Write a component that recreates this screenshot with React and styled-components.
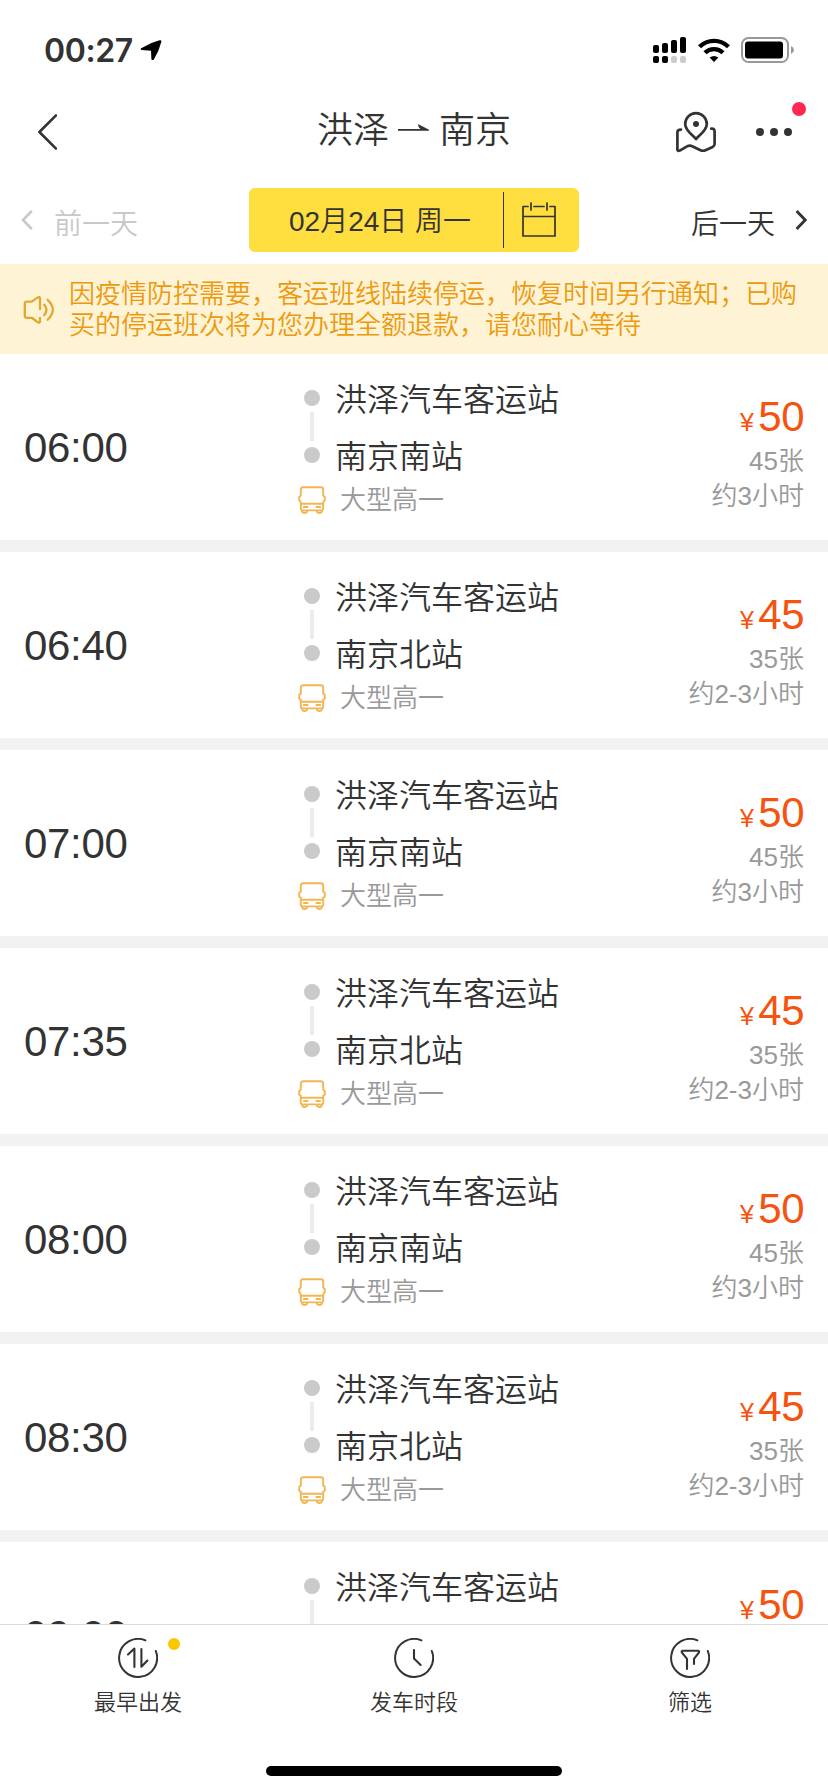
import React from "react"
import styled, { createGlobalStyle } from "styled-components"

const trips = [
  { time: "06:00", to: "南京南站", price: 50, left: 45, duration: "约3小时" },
  { time: "06:40", to: "南京北站", price: 45, left: 35, duration: "约2-3小时" },
  { time: "07:00", to: "南京南站", price: 50, left: 45, duration: "约3小时" },
  { time: "07:35", to: "南京北站", price: 45, left: 35, duration: "约2-3小时" },
  { time: "08:00", to: "南京南站", price: 50, left: 45, duration: "约3小时" },
  { time: "08:30", to: "南京北站", price: 45, left: 35, duration: "约2-3小时" },
  { time: "09:00", to: "南京南站", price: 50, left: 45, duration: "约3小时" },
]

export default function App() {
  return (
    <Page>
      <GlobalStyle />
      <StatusBar />
      <NavBar />
      <DateBar />
      <Notice>
        <SpeakerIcon />
        <p>
          因疫情防控需要，客运班线陆续停运，恢复时间另行通知；已购买的停运班次将为您办理全额退款，请您耐心等待
        </p>
      </Notice>
      <TripList>
        {trips.map((trip) => (
          <TripItem key={trip.time} {...trip} />
        ))}
      </TripList>
      <TabBar />
    </Page>
  )
}

function StatusBar() {
  return (
    <Status>
      <Clock>00:27</Clock>
      <svg width="22" height="21" viewBox="0 0 22 21">
        <path
          d="M1.2 8.2 Q10 2.6 19.6 .2 Q21.8 -.2 21.3 2 Q19 11 14 19.2 Q12.4 21 11.4 19.2 L11 10.7 L1.6 9.9 Q-.3 9.4 1.2 8.2Z"
          fill="#000"
        />
      </svg>
      <StatusIcons>
        <svg width="34" height="27" viewBox="0 0 34 27">
          <rect x="0" y="8" width="6" height="8" rx="2" />
          <rect x="9" y="6" width="6" height="10" rx="2" />
          <rect x="18" y="3" width="6" height="13" rx="2" />
          <rect x="27" y="0" width="6" height="16" rx="2" />
          <rect x="0" y="19" width="6" height="7" rx="2" />
          <rect x="9" y="19" width="6" height="7" rx="2" />
          <rect x="18" y="19" width="6" height="7" rx="2" fill="#ccc" />
          <rect x="27" y="19" width="6" height="7" rx="2" fill="#ccc" />
        </svg>
        <svg width="32" height="25" viewBox="0 0 32 25">
          <g fill="none" stroke="#000" strokeWidth="4.4">
            <path d="M1.5 8.8 A20.6 20.6 0 0 1 30.5 8.8" />
            <path d="M7 14.8 A12.8 12.8 0 0 1 25 14.8" />
          </g>
          <path d="M16 24 L11.6 19.6 Q16 16.4 20.4 19.6Z" />
        </svg>
        <svg width="54" height="26" viewBox="0 0 54 26">
          <rect x="1" y="1" width="46" height="24" rx="6.5" fill="none" stroke="#999" strokeWidth="2" />
          <rect x="4" y="4.5" width="38" height="17" rx="3" />
          <path d="M50 9 Q53 10.4 53 13 Q53 15.6 50 17Z" fill="#999" />
        </svg>
      </StatusIcons>
    </Status>
  )
}

function NavBar() {
  return (
    <Nav>
      <NavSide>
        <svg width="20" height="38" viewBox="0 0 20 38">
          <path d="M19 2.4 L2.4 19 L19 35.6" {...line} strokeWidth="2.6" />
        </svg>
      </NavSide>
      <Title>
        洪泽
        <svg width="32" height="10" viewBox="0 0 32 10">
          <path d="M0 7.8 H31 V6.8 L20 1 Q20 4 22.4 6 H0Z" fill="#333" />
        </svg>
        南京
      </Title>
      <NavSide $right>
        <svg width="42" height="42" viewBox="0 0 42 42">
          <g {...line} strokeWidth="2.7">
            <path d="M21 28 C17.4 23.8 10.2 19.6 10.2 13 A10.8 10.8 0 0 1 31.8 13 C31.8 19.6 24.6 23.8 21 28Z" />
            <path d="M6 18.6 Q2.4 18.6 2.4 21.4 V38.6 Q2.4 40.6 4.8 39.6 L12 35.4 Q14.6 34 17.2 35.2 L25.6 39.2 Q28 40.4 31 39 L37.6 36 Q39.6 35 39.6 33 V20.4 Q39.6 17.2 36.2 17.6" />
          </g>
          <circle cx="21" cy="13" r="3" fill="#333" />
        </svg>
        <More>
          <i />
          <i />
          <i />
          <Badge />
        </More>
      </NavSide>
    </Nav>
  )
}

function DateBar() {
  return (
    <Dates>
      <DayLink $muted>
        <svg width="12" height="22" viewBox="0 0 12 22">
          <path d="M10.8 2 L2 11 L10.8 20" fill="none" stroke="currentColor" strokeWidth="2.6" />
        </svg>
        <span>前一天</span>
      </DayLink>
      <DatePicker>
        <span>02月24日 周一</span>
        <svg width="36" height="36" viewBox="0 0 36 36">
          <path d="M7 4.5 H2 V34 H34 V4.5 H29 M13 4.5 H23 M2 14.5 H34 M10 1 V8 M26 1 V8" {...line} strokeWidth="1.7" />
        </svg>
      </DatePicker>
      <DayLink $right>
        <span>后一天</span>
        <svg width="12" height="22" viewBox="0 0 12 22">
          <path d="M1.6 2 L10.2 11 L1.6 20" fill="none" stroke="currentColor" strokeWidth="2.8" />
        </svg>
      </DayLink>
    </Dates>
  )
}

function SpeakerIcon() {
  return (
    <svg width="32" height="30" viewBox="0 0 32 30">
      <g fill="none" stroke="#e2a82c" strokeWidth="2.3" strokeLinecap="round" strokeLinejoin="round">
        <path d="M17 14 V3.8 Q17 1.2 14.8 2.4 L8.8 6.6 H3.8 Q1.8 6.6 1.8 8.6 V20.8 Q1.8 22.8 3.8 22.8 H8.8 L14.8 27.2 Q17 28.4 17 26.2 V23" />
        <path d="M21.2 9.8 Q25.6 14.8 21.2 20.2" />
        <path d="M24.6 4.8 Q35 14.6 24.6 24.8" />
      </g>
    </svg>
  )
}

function BusIcon() {
  return (
    <svg width="28" height="28" viewBox="0 0 28 28">
      <g fill="none" stroke="#f3b552" strokeWidth="1.9" strokeLinecap="round">
        <path d="M2.8 9.6 V3.6 Q2.8 1.2 5.2 1.2 H22.8 Q25.2 1.2 25.2 3.6 V9.6 L26.8 11 V14.4 L25.2 16 V22.6 Q25.2 24.4 23.4 24.4 H4.6 Q2.8 24.4 2.8 22.6 V16 L1.2 14.4 V11Z" />
        <path d="M2.8 17.8 H25.2 M5.8 21 H9.6 M18.4 21 H22.2 M4 25 Q4.4 27 6.4 27 Q8.8 27 9.2 25 M18.8 25 Q19.2 27 21.6 27 Q23.6 27 24 25" />
      </g>
    </svg>
  )
}

function TripItem({ time, to, price, left, duration }) {
  return (
    <Trip>
      <Time>{time}</Time>
      <Route>
        <Stop>洪泽汽车客运站</Stop>
        <Connector />
        <Stop>{to}</Stop>
        <BusType>
          <BusIcon />
          大型高一
        </BusType>
      </Route>
      <Fare>
        <Price>
          <small>¥</small>
          {price}
        </Price>
        <span>{left}张</span>
        <span>{duration}</span>
      </Fare>
    </Trip>
  )
}

function TabBar() {
  return (
    <Footer>
      <Tabs>
        <Tab>
          <TabIcon d="M10 16.6 L16.4 10.6 V29 M23.4 11 V28.8 L29.4 22.6" dot />
          最早出发
        </Tab>
        <Tab>
          <TabIcon d="M20 12 V20.6 L26.6 27" />
          发车时段
        </Tab>
        <Tab>
          <TabIcon d="M17 31 V20.8 L11.8 14.4 Q11.2 12.8 12.8 12.8 H28 Q29.6 12.8 29 14.4 L24 20.8 V26" />
          筛选
        </Tab>
      </Tabs>
      <HomeIndicator />
    </Footer>
  )
}

function TabIcon({ d, dot }) {
  return (
    <IconBox>
      <svg width="40" height="40" viewBox="0 0 40 40">
        <path d="M27.4 2.4 A19 19 0 1 0 37.8 13" {...line} strokeWidth="2" />
        <path d={d} {...line} strokeWidth="2.1" />
      </svg>
      {dot && <TabDot />}
    </IconBox>
  )
}

const line = {
  fill: "none",
  stroke: "#333",
  strokeLinecap: "round",
  strokeLinejoin: "round",
}

const GlobalStyle = createGlobalStyle`
  * {
    box-sizing: border-box;
  }
  body {
    margin: 0;
    background: #fff;
    color: #333;
    font-family: "Liberation Sans", "Noto Sans CJK SC", sans-serif;
    font-weight: 350;
  }
  svg {
    display: block;
    flex-shrink: 0;
  }
`

const Page = styled.div`
  display: flex;
  flex-direction: column;
  width: 828px;
  height: 1792px;
  overflow: hidden;
`

const Status = styled.div`
  display: flex;
  align-items: center;
  height: 88px;
  padding: 12px 33px 0 44px;
  flex-shrink: 0;
`

const Clock = styled.span`
  width: 96px;
  font-family: Inter, sans-serif;
  font-size: 32px;
  font-weight: 600;
  letter-spacing: -0.4px;
`

const StatusIcons = styled.div`
  display: flex;
  align-items: center;
  gap: 11px;
  margin-left: auto;
`

const Nav = styled.header`
  display: grid;
  grid-template-columns: 1fr auto 1fr;
  align-items: center;
  height: 88px;
  padding: 0 36px 0 37px;
  flex-shrink: 0;
`

const NavSide = styled.div`
  display: flex;
  align-items: center;
  justify-content: ${(props) => (props.$right ? "flex-end" : "flex-start")};
  gap: 39px;
`

const Title = styled.h1`
  display: flex;
  align-items: center;
  gap: 9px;
  margin: 0 1px 2px 0;
  font-size: 36px;
  font-weight: 350;
  line-height: 44px;
  svg {
    margin-bottom: 7px;
  }
`

const More = styled.div`
  position: relative;
  display: flex;
  gap: 6px;
  i {
    width: 8px;
    height: 8px;
    border-radius: 50%;
    background: #333;
  }
`

const Badge = styled.b`
  position: absolute;
  top: -26px;
  right: -14px;
  width: 14px;
  height: 14px;
  border-radius: 50%;
  background: #ff2850;
`

const Dates = styled.div`
  display: grid;
  grid-template-columns: 1fr 330px 1fr;
  align-items: center;
  height: 88px;
  padding: 0 21px;
  flex-shrink: 0;
`

const DayLink = styled.div`
  display: flex;
  align-items: center;
  justify-content: ${(props) => (props.$right ? "flex-end" : "flex-start")};
  gap: ${(props) => (props.$right ? "20px" : "21px")};
  color: ${(props) => (props.$muted ? "#c8c8c8" : "#333")};
  font-size: 28px;
  span {
    padding-top: 4px;
  }
`

const DatePicker = styled.div`
  display: flex;
  align-items: center;
  height: 64px;
  border-radius: 6px;
  background: #ffde3f;
  font-size: 28px;
  span {
    width: 255px;
    height: 56px;
    margin-right: 17px;
    padding-left: 40px;
    border-right: 1px solid #333;
    line-height: 60px;
    white-space: nowrap;
  }
`

const Notice = styled.div`
  display: flex;
  align-items: center;
  gap: 14px;
  height: 90px;
  padding: 2px 20px 0 23px;
  flex-shrink: 0;
  background: #fff3d6;
  color: #ec9a0c;
  font-size: 26px;
  line-height: 31px;
  p {
    margin: 0;
  }
`

const TripList = styled.ul`
  flex: 1;
  min-height: 0;
  margin: 0;
  padding: 0;
  overflow: hidden;
  list-style: none;
`

const Trip = styled.li`
  display: grid;
  grid-template-columns: 274px 1fr auto;
  height: 198px;
  padding: 0 24px;
  border-bottom: 12px solid #f2f2f2;
`

const Time = styled.div`
  align-self: center;
  padding-top: 1px;
  font-size: 42px;
  letter-spacing: -0.3px;
`

const Route = styled.div`
  padding-top: 30px;
`

const Stop = styled.div`
  display: flex;
  align-items: center;
  gap: 15px;
  height: 32px;
  padding-left: 6px;
  font-size: 32px;
  line-height: 32px;
  &::before {
    content: "";
    width: 16px;
    height: 16px;
    margin-bottom: 4px;
    border-radius: 50%;
    background: #cacaca;
  }
`

const Connector = styled.div`
  width: 4px;
  height: 29px;
  margin: -4px 12px 0;
  background: #ebebeb;
`

const BusType = styled.div`
  display: flex;
  align-items: center;
  gap: 14px;
  margin-top: 13px;
  color: #999;
  font-size: 26px;
  line-height: 28px;
`

const Fare = styled.div`
  display: flex;
  flex-direction: column;
  align-items: flex-end;
  padding-top: 37px;
  color: #999;
  font-size: 26px;
  line-height: 35px;
`

const Price = styled.div`
  height: 53px;
  color: #f5530f;
  font-size: 42px;
  line-height: 51px;
  letter-spacing: -0.5px;
  small {
    margin-right: 5px;
    font-size: 25px;
  }
`

const Footer = styled.footer`
  height: 168px;
  flex-shrink: 0;
  border-top: 1px solid #dcdcdc;
  background: #fff;
`

const Tabs = styled.nav`
  display: grid;
  grid-template-columns: repeat(3, 1fr);
  height: 141px;
  padding-top: 13px;
`

const Tab = styled.div`
  display: flex;
  flex-direction: column;
  align-items: center;
  gap: 9px;
  font-size: 22px;
  line-height: 32px;
`

const IconBox = styled.div`
  position: relative;
`

const TabDot = styled.i`
  position: absolute;
  top: 0;
  right: -22px;
  width: 12px;
  height: 12px;
  border-radius: 50%;
  background: #fac800;
`

const HomeIndicator = styled.div`
  width: 296px;
  height: 10px;
  margin: 0 auto;
  border-radius: 5px;
  background: #000;
`
